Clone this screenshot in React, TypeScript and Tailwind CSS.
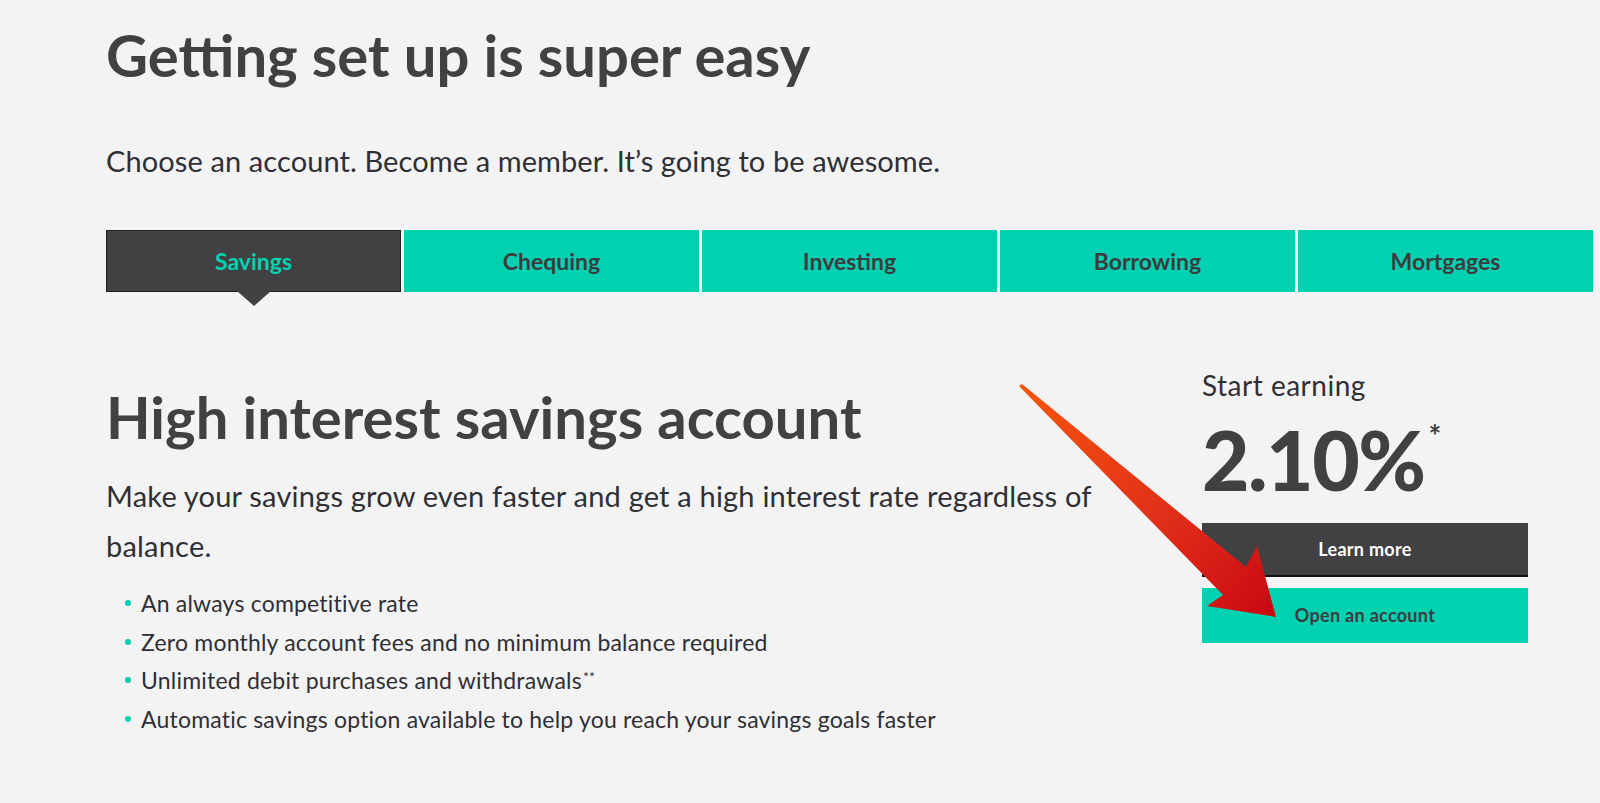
import React from 'react';

const TABS = ['Savings', 'Chequing', 'Investing', 'Borrowing', 'Mortgages'];

const FEATURES = [
  { text: 'An always competitive rate' },
  { text: 'Zero monthly account fees and no minimum balance required' },
  { text: 'Unlimited debit purchases and withdrawals', note: '**' },
  { text: 'Automatic savings option available to help you reach your savings goals faster' },
];

function PointerArrow() {
  // annotation arrow drawn over the page
  return (
    <svg
      className="pointer-events-none absolute left-0 top-0"
      width="1600"
      height="803"
      viewBox="0 0 1600 803"
    >
      <defs>
        <linearGradient id="arrowFill" x1="1020" y1="385" x2="1276" y2="617" gradientUnits="userSpaceOnUse">
          <stop offset="0" stopColor="#f5560c" />
          <stop offset="0.55" stopColor="#e2301a" />
          <stop offset="1" stopColor="#c80812" />
        </linearGradient>
      </defs>
      <polygon
        points="1019,386 1022,384 1246,567 1257,546 1276,617 1207,606 1223,595"
        fill="url(#arrowFill)"
      />
    </svg>
  );
}

export default function App() {
  return (
    <div className="relative min-h-[803px] w-full overflow-hidden bg-[#f3f3f3] font-['Lato',sans-serif] text-[#414042]">
      <div className="pl-[106px] pt-[26px]">
        <h1 className="text-[58px] font-bold leading-none">Getting set up is super easy</h1>
        <p className="mt-[62px] text-[29px] leading-none tracking-[0.1px] text-[#302f33]">
          Choose an account. Become a member. It’s going to be awesome.
        </p>

        <div className="mt-[55px] grid w-[1487px] grid-cols-5 gap-[3px]">
          {TABS.map((tab, i) =>
            i === 0 ? (
              <div
                key={tab}
                className="relative flex h-[62px] items-center justify-center border border-[#1f1f1f] bg-[#414042] text-[23px] font-bold text-[#00d2b1]"
              >
                {tab}
                <span className="absolute left-1/2 top-full -ml-[17px] h-0 w-0 border-x-[17px] border-t-[15px] border-x-transparent border-t-[#414042]" />
              </div>
            ) : (
              <div
                key={tab}
                className="flex h-[62px] items-center justify-center bg-[#00d2b1] text-[23px] font-bold text-[#3d3b3f]"
              >
                {tab}
              </div>
            )
          )}
        </div>

        <div className="mt-[77px] flex items-start">
          <div className="w-[1000px] pt-[19px]">
            <h2 className="text-[58px] font-bold leading-none">High interest savings account</h2>
            <p className="mt-[25px] text-[29px] leading-[50px] tracking-[0.2px] text-[#302f33]">
              Make your savings grow even faster and get a high interest rate regardless of balance.
            </p>
            <ul className="mt-[13px] text-[23px] leading-[38.5px] tracking-[0.2px] text-[#302f33]">
              {FEATURES.map((f) => (
                <li key={f.text} className="flex items-center">
                  <span className="ml-[19px] mr-[10px] h-[6px] w-[6px] rounded-full bg-[#00d2b1]" />
                  <span>
                    {f.text}
                    {f.note && <sup className="ml-[1px] text-[14px]">{f.note}</sup>}
                  </span>
                </li>
              ))}
            </ul>
          </div>

          <div className="ml-[96px] w-[326px] pt-[2px]">
            <p className="text-[28px] leading-none tracking-[0.5px] text-[#302f33]">Start earning</p>
            <div className="mt-[19px] flex items-start">
              <span className="text-[82px] font-black leading-none tracking-[-1.5px]">2.10%</span>
              <span className="ml-[4px] mt-[2px] text-[30px] font-bold leading-none">*</span>
            </div>
            <button
              type="button"
              className="mt-[23px] flex h-[54px] w-full items-center justify-center border-b-2 border-[#111111] bg-[#414042] text-[18px] font-bold tracking-[0.3px] text-white"
            >
              Learn more
            </button>
            <button
              type="button"
              className="mt-[11px] flex h-[55px] w-full items-center justify-center bg-[#00d2b1] text-[18px] font-bold tracking-[0.3px] text-[#3d3b3f]"
            >
              Open an account
            </button>
          </div>
        </div>
      </div>

      <PointerArrow />
    </div>
  );
}
